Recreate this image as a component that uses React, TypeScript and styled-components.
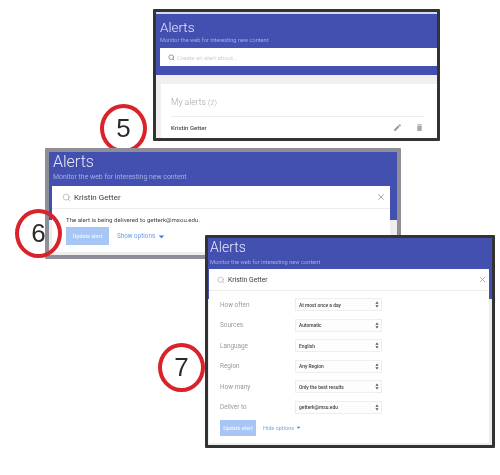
import styled, { createGlobalStyle } from "styled-components";
import { Search, X } from "lucide-react";
import { MdArrowDropDown, MdDelete, MdEdit } from "react-icons/md";

const options = [
  { label: "How often", value: "At most once a day" },
  { label: "Sources", value: "Automatic" },
  { label: "Language", value: "English" },
  { label: "Region", value: "Any Region" },
  { label: "How many", value: "Only the best results" },
  { label: "Deliver to", value: "getterk@msu.edu" },
];

const App = () => {
  return (
    <Canvas>
      <GlobalStyle />

      <Shot $x={153} $y={9} $w={287} $h={132} $edge="#333333" $size={3}>
        <TopStripe />
        <Banner>
          <Title $size={13.5}>Alerts</Title>
          <Subtitle $size={5.6}>Monitor the web for interesting new content</Subtitle>
          <CreateBox>
            <Search size={7} strokeWidth={3} color="#8a8a8a" />
            <span>Create an alert about...</span>
          </CreateBox>
        </Banner>
        <ListArea>
          <ListCard>
            <ListTitle>
              My alerts <small>(2)</small>
            </ListTitle>
            <AlertRow>
              <AlertName>Kristin Getter</AlertName>
              <MdEdit size={9} color="#9a9a9a" />
              <MdDelete size={9} color="#a8a8a8" />
            </AlertRow>
          </ListCard>
        </ListArea>
      </Shot>

      <Marker $x={100} $y={104}>5</Marker>

      <Shot $x={45} $y={148} $w={356} $h={111} $edge="#8e8e98" $size={4}>
        <Split $blue={68} $pad={3}>
          <TitleBlock $left={1} $top={1}>
            <Title $size={16}>Alerts</Title>
            <Subtitle $size={6.9} $gap={2}>Monitor the web for interesting new content</Subtitle>
          </TitleBlock>
          <EditCard $top={5} $right={7} $height={66}>
            <SearchLine $height={23} $pad={10} $end={4}>
              <Search size={9} strokeWidth={1.6} color="#9b9b9b" />
              <QueryText $size={8}>Kristin Getter</QueryText>
              <X size={10} strokeWidth={2} color="#9c9c9c" />
            </SearchLine>
            <Notice>The alert is being delivered to getterk@msou.edu.</Notice>
            <Actions $left={14} $top={3} $gap={8}>
              <UpdateButton $w={43} $h={18}>Update alert</UpdateButton>
              <OptionLink>
                Show options <MdArrowDropDown size={13} />
              </OptionLink>
            </Actions>
          </EditCard>
        </Split>
      </Shot>

      <Marker $x={15} $y={209}>6</Marker>

      <Shot $x={205} $y={235} $w={290} $h={213} $edge="#333333" $size={3}>
        <Split $blue={61} $pad={1}>
          <TitleBlock $left={1} $top={0}>
            <Title $size={14}>Alerts</Title>
            <Subtitle $size={5.7} $gap={2}>Monitor the web for interesting new content</Subtitle>
          </TitleBlock>
          <EditCard $top={3} $right={3} $height={174}>
            <SearchLine $height={22} $pad={8} $end={2}>
              <Search size={8} strokeWidth={1.6} color="#9b9b9b" />
              <QueryText $size={6.8}>Kristin Getter</QueryText>
              <X size={9} strokeWidth={2} color="#9c9c9c" />
            </SearchLine>
            <OptionGrid>
              {options.map((option) => (
                <OptionRow key={option.label}>
                  <OptionLabel>{option.label}</OptionLabel>
                  <FakeSelect>
                    <span>{option.value}</span>
                    <SelectArrows viewBox="0 0 6 10">
                      <path d="M3 0.5 5.4 3.8H0.6zM3 9.5 0.6 6.2H5.4z" fill="#555555" />
                    </SelectArrows>
                  </FakeSelect>
                </OptionRow>
              ))}
            </OptionGrid>
            <Actions $left={11} $top={6} $gap={7}>
              <UpdateButton $w={36} $h={16}>Update alert</UpdateButton>
              <HideLink>
                Hide options <MdArrowDropDown size={9} />
              </HideLink>
            </Actions>
          </EditCard>
        </Split>
      </Shot>

      <Marker $x={158} $y={343}>7</Marker>
    </Canvas>
  );
};

const GlobalStyle = createGlobalStyle`
  html, body {
    margin: 0;
    padding: 0;
    background: #ffffff;
  }
  * {
    box-sizing: border-box;
  }
`;
const Canvas = styled.div`
  position: relative;
  width: 500px;
  height: 475px;
  overflow: hidden;
  background: #ffffff;
  font-family: Roboto, "Liberation Sans", sans-serif;
  filter: blur(0.5px);
`;
const Shot = styled.div<{ $x: number; $y: number; $w: number; $h: number; $edge: string; $size: number }>`
  position: absolute;
  left: ${(p) => p.$x}px;
  top: ${(p) => p.$y}px;
  width: ${(p) => p.$w}px;
  height: ${(p) => p.$h}px;
  border: ${(p) => p.$size}px solid ${(p) => p.$edge};
  border-radius: 1px;
  background: #ffffff;
  display: flex;
  flex-direction: column;
  overflow: hidden;
`;
const Marker = styled.div<{ $x: number; $y: number }>`
  position: absolute;
  left: ${(p) => p.$x}px;
  top: ${(p) => p.$y}px;
  width: 47px;
  height: 49px;
  border: 4px solid #d8232a;
  border-radius: 50%;
  display: flex;
  align-items: center;
  justify-content: center;
  color: #2b2b2b;
  font-family: "Liberation Sans", Arial, sans-serif;
  font-size: 26px;
`;
const TopStripe = styled.div`
  height: 2px;
  background: #d8daf0;
`;
const Banner = styled.div`
  height: 61px;
  padding: 4px 0 0 4px;
  background: #4450b0;
`;
const Title = styled.div<{ $size: number }>`
  height: 18px;
  color: #e6e8fa;
  font-size: ${(p) => p.$size}px;
  font-weight: 300;
  line-height: 18px;
`;
const Subtitle = styled.div<{ $size: number; $gap?: number }>`
  margin-top: ${(p) => p.$gap ?? 0}px;
  color: #a5abe4;
  font-size: ${(p) => p.$size}px;
  line-height: 8px;
  white-space: nowrap;
`;
const CreateBox = styled.div`
  display: flex;
  align-items: center;
  gap: 2px;
  height: 18px;
  margin-top: 4px;
  padding-left: 8px;
  background: #ffffff;
  color: #cfcfcf;
  font-size: 6px;
`;
const ListArea = styled.div`
  flex: 1;
  padding: 9px 0 0 5px;
  background: #f0f0f0;
`;
const ListCard = styled.div`
  height: 100%;
  padding: 11px 13px 0 10px;
  background: #ffffff;
`;
const ListTitle = styled.div`
  height: 22px;
  border-bottom: 1px solid #ececec;
  color: #a6a6a6;
  font-size: 8.6px;
  font-weight: 300;
  line-height: 14px;
  small {
    font-size: 7.5px;
  }
`;
const AlertRow = styled.div`
  display: flex;
  align-items: center;
  gap: 13px;
  height: 21px;
`;
const AlertName = styled.div`
  flex: 1;
  color: #4a4a4a;
  font-size: 6px;
  font-weight: 500;
`;
const Split = styled.div<{ $blue: number; $pad: number }>`
  flex: 1;
  padding-left: ${(p) => p.$pad}px;
  background: linear-gradient(#4450b0 ${(p) => p.$blue}px, #eeeeee ${(p) => p.$blue}px);
`;
const TitleBlock = styled.div<{ $left: number; $top: number }>`
  margin: ${(p) => p.$top}px 0 0 ${(p) => p.$left}px;
`;
const EditCard = styled.div<{ $top: number; $right: number; $height: number }>`
  height: ${(p) => p.$height}px;
  margin: ${(p) => p.$top}px ${(p) => p.$right}px 0 0;
  background: #ffffff;
`;
const SearchLine = styled.div<{ $height: number; $pad: number; $end: number }>`
  display: flex;
  align-items: center;
  gap: 3px;
  height: ${(p) => p.$height}px;
  padding: 0 ${(p) => p.$end}px 0 ${(p) => p.$pad}px;
  border-bottom: 1px solid #ececec;
`;
const QueryText = styled.div<{ $size: number }>`
  flex: 1;
  color: #3c3c3c;
  font-size: ${(p) => p.$size}px;
`;
const Notice = styled.div`
  margin: 6px 0 0 14px;
  color: #444444;
  font-size: 6.1px;
  line-height: 9px;
`;
const Actions = styled.div<{ $left: number; $top: number; $gap: number }>`
  display: flex;
  align-items: center;
  gap: ${(p) => p.$gap}px;
  margin: ${(p) => p.$top}px 0 0 ${(p) => p.$left}px;
`;
const UpdateButton = styled.div<{ $w: number; $h: number }>`
  display: flex;
  align-items: center;
  justify-content: center;
  width: ${(p) => p.$w}px;
  height: ${(p) => p.$h}px;
  background: #a7c6f5;
  color: #e6effc;
  font-size: 5.4px;
  font-weight: 700;
  white-space: nowrap;
`;
const OptionLink = styled.div`
  display: flex;
  align-items: center;
  color: #6f9be0;
  font-size: 6.3px;
  white-space: nowrap;
  svg {
    color: #3f73cf;
  }
`;
const HideLink = styled(OptionLink)`
  font-size: 5.5px;
  color: #82a7e4;
`;
const OptionGrid = styled.div`
  display: flex;
  flex-direction: column;
  gap: 7.6px;
  padding: 7px 0 0 11px;
`;
const OptionRow = styled.div`
  display: flex;
  align-items: center;
  height: 13px;
`;
const OptionLabel = styled.div`
  width: 75px;
  color: #9a9a9a;
  font-size: 6.4px;
`;
const FakeSelect = styled.div`
  display: flex;
  align-items: center;
  justify-content: space-between;
  width: 87px;
  height: 13px;
  padding: 0 2px 0 3px;
  border: 1px solid #eeeeee;
  background: #fdfdfd;
  color: #3f3f3f;
  font-size: 4.9px;
  font-weight: 500;
  white-space: nowrap;
`;
const SelectArrows = styled.svg`
  width: 4px;
  height: 7px;
`;

export default App;
